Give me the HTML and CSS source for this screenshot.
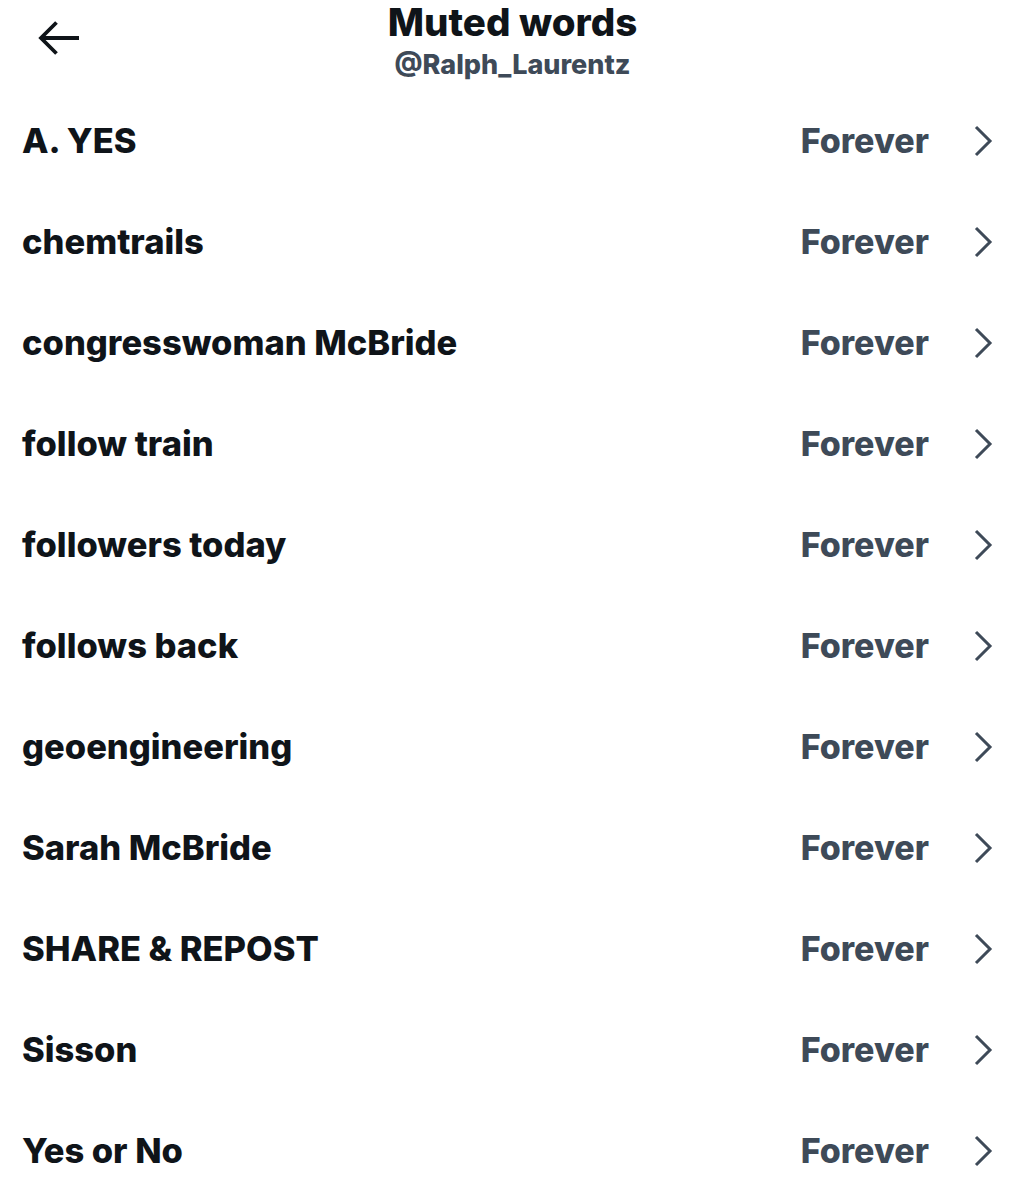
FILE: index.html
```html
<!DOCTYPE html>
<html>
<head>
<meta charset="utf-8">
<link rel="stylesheet" href="styles.css">
</head>
<body>
<div class="page">
  <header class="header">
    <div class="back">
      <svg width="44" height="36" viewBox="0 0 44 36"><path d="M42 18H4.5M19.5 2.5L4 18l15.5 15.5" fill="none" stroke="#0f1419" stroke-width="3.8" stroke-linecap="butt" stroke-linejoin="miter"/></svg>
    </div>
    <div class="titles">
      <div class="title">Muted words</div>
      <div class="subtitle">@Ralph_Laurentz</div>
    </div>
  </header>
  <ul class="list">
    <li class="row"><span class="word">A. YES</span><span class="dur">Forever</span><svg class="chev" width="20" height="32" viewBox="0 0 20 32"><path d="M3 2l14 14L3 30" fill="none" stroke="#3e4a58" stroke-width="3"/></svg></li>
    <li class="row"><span class="word">chemtrails</span><span class="dur">Forever</span><svg class="chev" width="20" height="32" viewBox="0 0 20 32"><path d="M3 2l14 14L3 30" fill="none" stroke="#3e4a58" stroke-width="3"/></svg></li>
    <li class="row"><span class="word">congresswoman McBride</span><span class="dur">Forever</span><svg class="chev" width="20" height="32" viewBox="0 0 20 32"><path d="M3 2l14 14L3 30" fill="none" stroke="#3e4a58" stroke-width="3"/></svg></li>
    <li class="row"><span class="word">follow train</span><span class="dur">Forever</span><svg class="chev" width="20" height="32" viewBox="0 0 20 32"><path d="M3 2l14 14L3 30" fill="none" stroke="#3e4a58" stroke-width="3"/></svg></li>
    <li class="row"><span class="word">followers today</span><span class="dur">Forever</span><svg class="chev" width="20" height="32" viewBox="0 0 20 32"><path d="M3 2l14 14L3 30" fill="none" stroke="#3e4a58" stroke-width="3"/></svg></li>
    <li class="row"><span class="word">follows back</span><span class="dur">Forever</span><svg class="chev" width="20" height="32" viewBox="0 0 20 32"><path d="M3 2l14 14L3 30" fill="none" stroke="#3e4a58" stroke-width="3"/></svg></li>
    <li class="row"><span class="word">geoengineering</span><span class="dur">Forever</span><svg class="chev" width="20" height="32" viewBox="0 0 20 32"><path d="M3 2l14 14L3 30" fill="none" stroke="#3e4a58" stroke-width="3"/></svg></li>
    <li class="row"><span class="word">Sarah McBride</span><span class="dur">Forever</span><svg class="chev" width="20" height="32" viewBox="0 0 20 32"><path d="M3 2l14 14L3 30" fill="none" stroke="#3e4a58" stroke-width="3"/></svg></li>
    <li class="row"><span class="word">SHARE &amp; REPOST</span><span class="dur">Forever</span><svg class="chev" width="20" height="32" viewBox="0 0 20 32"><path d="M3 2l14 14L3 30" fill="none" stroke="#3e4a58" stroke-width="3"/></svg></li>
    <li class="row"><span class="word">Sisson</span><span class="dur">Forever</span><svg class="chev" width="20" height="32" viewBox="0 0 20 32"><path d="M3 2l14 14L3 30" fill="none" stroke="#3e4a58" stroke-width="3"/></svg></li>
    <li class="row"><span class="word">Yes or No</span><span class="dur">Forever</span><svg class="chev" width="20" height="32" viewBox="0 0 20 32"><path d="M3 2l14 14L3 30" fill="none" stroke="#3e4a58" stroke-width="3"/></svg></li>
  </ul>
</div>
</body>
</html>
```
FILE: styles.css
```css
html, body {
  margin: 0;
  padding: 0;
  background: #ffffff;
}
.page {
  width: 1025px;
  font-family: Inter, "Liberation Sans", sans-serif;
}
.header {
  position: relative;
  height: 90px;
  display: flex;
  justify-content: center;
}
.back {
  position: absolute;
  left: 37px;
  top: 20px;
  width: 44px;
  height: 36px;
}
.back svg { display: block; }
.titles {
  display: flex;
  flex-direction: column;
  align-items: center;
}
.title {
  font-size: 38.5px;
  font-weight: 800;
  color: #0f1419;
  line-height: 44px;
}
.subtitle {
  font-size: 27px;
  font-weight: 800;
  color: #3e4a58;
  line-height: 42px;
}
.list {
  list-style: none;
  margin: 0;
  padding: 0;
}
.row {
  height: 101px;
  display: flex;
  align-items: center;
  padding: 0 32px 0 22px;
}
.word {
  flex: 1;
  font-size: 34.5px;
  font-weight: 800;
  color: #0f1419;
}
.dur {
  font-size: 34px;
  font-weight: 800;
  color: #3e4a58;
  margin-right: 44px;
}
.chev { display: block; }
```
